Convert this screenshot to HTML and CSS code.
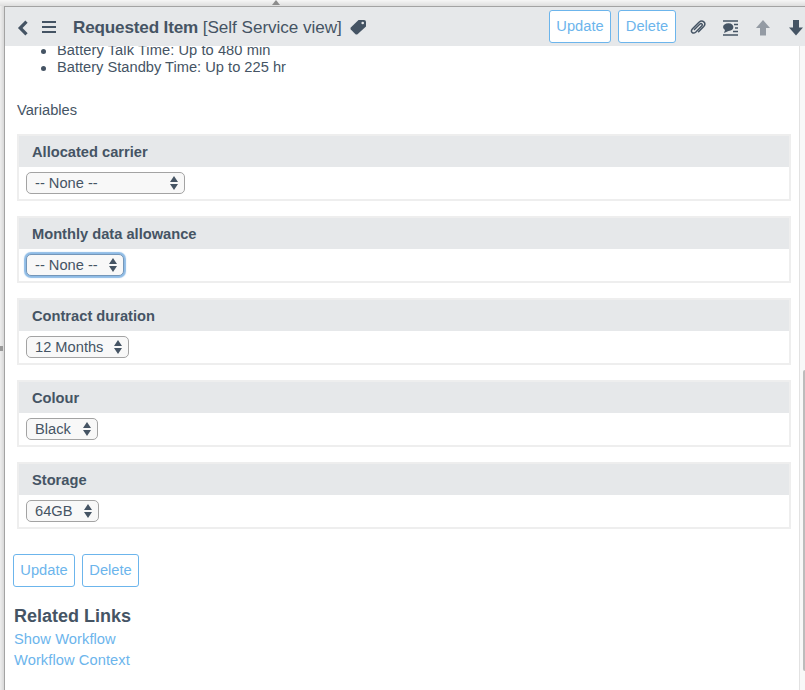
FILE: index.html
```html
<!DOCTYPE html>
<html lang="en">
<head>
<meta charset="utf-8">
<title>Requested Item</title>
<link rel="stylesheet" href="styles.css">
</head>
<body>
<div class="top-strip"><svg class="collapse" width="8" height="5" viewBox="0 0 8 5"><path d="M4 0L8 5H0z" fill="#8c8c8c"/></svg></div>
<div class="shell">
  <div class="side-strip"><i class="grip"></i></div>
  <div class="frame">
    <header class="bar">
      <svg class="back" width="12" height="16" viewBox="0 0 12 16"><path d="M9.500 1.700L3.200 8l6.300 6.300" fill="none" stroke="#455464" stroke-width="3.200"/></svg>
      <svg class="menu" width="14" height="12" viewBox="0 0 14 12"><path d="M0 1h14M0 6h14M0 11h14" stroke="#455464" stroke-width="2"/></svg>
      <h1 class="title"><b>Requested Item</b> [Self Service view]</h1>
      <svg class="tag" width="17" height="16" viewBox="0 0 17 16"><path d="M8.500 1H14q2 0 2 2v4.500L7.500 15.200q-1 .6-2 0L.8 10.600q-.7-1 0-2z" fill="#455464"/><circle cx="12.700" cy="4" r="1.300" fill="#e6e8ea"/></svg>
      <div class="actions">
        <button class="btn update">Update</button>
        <button class="btn delete">Delete</button>
        <svg class="clip" width="18" height="18" viewBox="0 0 18 18"><path d="M5.400 10.500L10.700 5.200c1.700-1.500 3.500.2 2 1.900L6.900 13c-3 2.600-6-.4-3.400-3.300L10 3.200c3.500-3 7.800.8 4.700 4.300L9.600 12.700" fill="none" stroke="#455464" stroke-width="1.500" stroke-linecap="round"/></svg>
        <svg class="activity" width="15" height="16" viewBox="0 0 15 16"><path d="M0 1h15M0 15h15M11 4.500h4M12 8h3M10 11.500h5" stroke="#455464" stroke-width="1.700"/><path d="M5.500 3.300c6.500 0 6.500 7.600 0 7.700L1 13l1-3C-1.800 7.600.4 3.300 5.500 3.300z" fill="#455464"/></svg>
        <svg class="up" width="14" height="16" viewBox="0 0 14 16"><path d="M7 0l7 8h-4v7.500H4V8H0z" fill="#949ba4"/></svg>
        <svg class="down" width="14" height="16" viewBox="0 0 14 16"><path d="M7 15.500L0 7.500h4V0h6v7.500h4z" fill="#455464"/></svg>
      </div>
    </header>
    <div class="scroll">
      <main class="content">
        <ul class="specs">
          <li><span class="talk">Battery Talk Time: Up to 480 min</span></li>
          <li><span>Battery Standby Time: Up to 225 hr</span></li>
        </ul>
        <p class="label">Variables</p>
        <section class="panel"><h2>Allocated carrier</h2><div class="field"><div class="select wide">-- None --<svg width="8" height="14" viewBox="0 0 8 14"><path d="M4 0l4 6H0zM4 14L0 8h8z" fill="#455464"/></svg></div></div></section>
        <section class="panel"><h2>Monthly data allowance</h2><div class="field"><div class="select allowance focus">-- None --<svg width="8" height="14" viewBox="0 0 8 14"><path d="M4 0l4 6H0zM4 14L0 8h8z" fill="#455464"/></svg></div></div></section>
        <section class="panel"><h2>Contract duration</h2><div class="field"><div class="select duration">12 Months<svg width="8" height="14" viewBox="0 0 8 14"><path d="M4 0l4 6H0zM4 14L0 8h8z" fill="#455464"/></svg></div></div></section>
        <section class="panel"><h2>Colour</h2><div class="field"><div class="select colour">Black<svg width="8" height="14" viewBox="0 0 8 14"><path d="M4 0l4 6H0zM4 14L0 8h8z" fill="#455464"/></svg></div></div></section>
        <section class="panel"><h2>Storage</h2><div class="field"><div class="select storage">64GB<svg width="8" height="14" viewBox="0 0 8 14"><path d="M4 0l4 6H0zM4 14L0 8h8z" fill="#455464"/></svg></div></div></section>
        <div class="footer-actions"><button class="btn update">Update</button><button class="btn delete low">Delete</button></div>
        <h3 class="related">Related Links</h3>
        <nav class="links"><a>Show Workflow</a><a>Workflow Context</a></nav>
      </main>
      <div class="track"><div class="thumb"></div></div>
    </div>
  </div>
</div>
</body>
</html>
```
FILE: styles.css
```css
* { box-sizing: border-box; }
body {
  margin: 0;
  height: 690px;
  overflow: hidden;
  display: flex;
  flex-direction: column;
  background: #fff;
  color: #455464;
  font: 14.67px/17px "Liberation Sans", Arial, sans-serif;
  white-space: nowrap;
}
svg { display: block; flex: none; }
h1, h2, h3, p, ul { margin: 0; padding: 0; }
.top-strip { height: 6px; flex: none; background: linear-gradient(#f6f6f6, #dedede); }
.collapse { margin-left: 272px; }
.shell { display: flex; flex: 1; min-height: 0; }
.side-strip { width: 4px; flex: none; padding-top: 340px; background: linear-gradient(90deg, #eee, #d8d8d8); }
.grip { display: block; width: 3px; height: 5px; background: #999; }
.frame { flex: 1; min-width: 0; display: flex; flex-direction: column; border-top: 1px solid #a3a3a3; border-left: 1px solid #a3a3a3; }
.bar { height: 39px; flex: none; display: flex; align-items: center; background: #e6e8ea; }
.back { margin-left: 12px; margin-top: 2px; }
.menu { margin-left: 13px; margin-top: 1px; }
.title { margin-left: 17px; width: 269px; font-size: 17px; line-height: 20px; font-weight: 400; letter-spacing: -.03px; margin-top: 2px; }
.title b { letter-spacing: -.16px; }
.title { font-size: 17.1px; }
.tag { margin-left: 8px; }
.actions { display: flex; align-items: center; margin-left: auto; margin-right: 2px; }
.actions svg { margin-top: 2px; }
.btn {
  height: 33px;
  padding: 0;
  border: 1px solid #6cb5ec;
  border-radius: 3px;
  background: #fff;
  color: #6cb5ec;
  font: inherit;
}
.update { width: 62px; }
.delete { width: 58px; margin-left: 7px; }
.low { width: 57px; }
.clip { margin-left: 13px; }
.activity { margin-left: 16px; }
.up { margin-left: 18px; }
.down { margin-left: 19px; }
.scroll { flex: 1; min-height: 0; display: flex; }
.content { flex: 1; overflow: hidden; padding: 0 8px; }
.specs { margin: -4px 0 0 44px; list-style: none; }
.specs li { display: flex; align-items: center; height: 17px; }
.specs li::before { content: ""; width: 5px; height: 5px; margin: 2px 11px 0 -16px; border-radius: 50%; background: #455464; }
.talk { letter-spacing: .06px; }
.label { margin: 26px 0 15px 4px; line-height: 17px; }
.panel { height: 67px; margin: 0 0 15px 4px; width: 774px; border: 2px solid #eee; }
.panel h2 { height: 31px; padding: 0 13px; background: #e6e8ea; font-size: 14.67px; line-height: 32px; }
.field { padding: 5px 7px; }
.select {
  display: flex;
  align-items: center;
  justify-content: space-between;
  height: 22px;
  padding: 0 6px 0 8px;
  border: 1px solid #a3a3a3;
  border-radius: 5px;
  background: #f8f8f8;
}
.wide { width: 159px; }
.allowance { width: 98px; }
.duration { width: 103px; }
.colour { width: 72px; }
.storage { width: 73px; }
.focus { border-color: #7597b9; box-shadow: 0 0 1px 2px #8fbce6; }
.footer-actions { display: flex; margin-top: 25px; }
.related { margin: 18px 0 0 1px; font-size: 18px; line-height: 22px; }
.links { display: flex; flex-direction: column; margin-left: 1px; color: #6cb5ec; line-height: 21px; margin-top: 2px; letter-spacing: .08px; }
.track { width: 6px; flex: none; padding: 324px 0 0 3px; border-left: 1px solid #e2e2e2; background: #f8f8f8; }
.thumb { height: 301px; width: 2px; border-radius: 3px 0 0 3px; background: #bcbcbc; }
```
